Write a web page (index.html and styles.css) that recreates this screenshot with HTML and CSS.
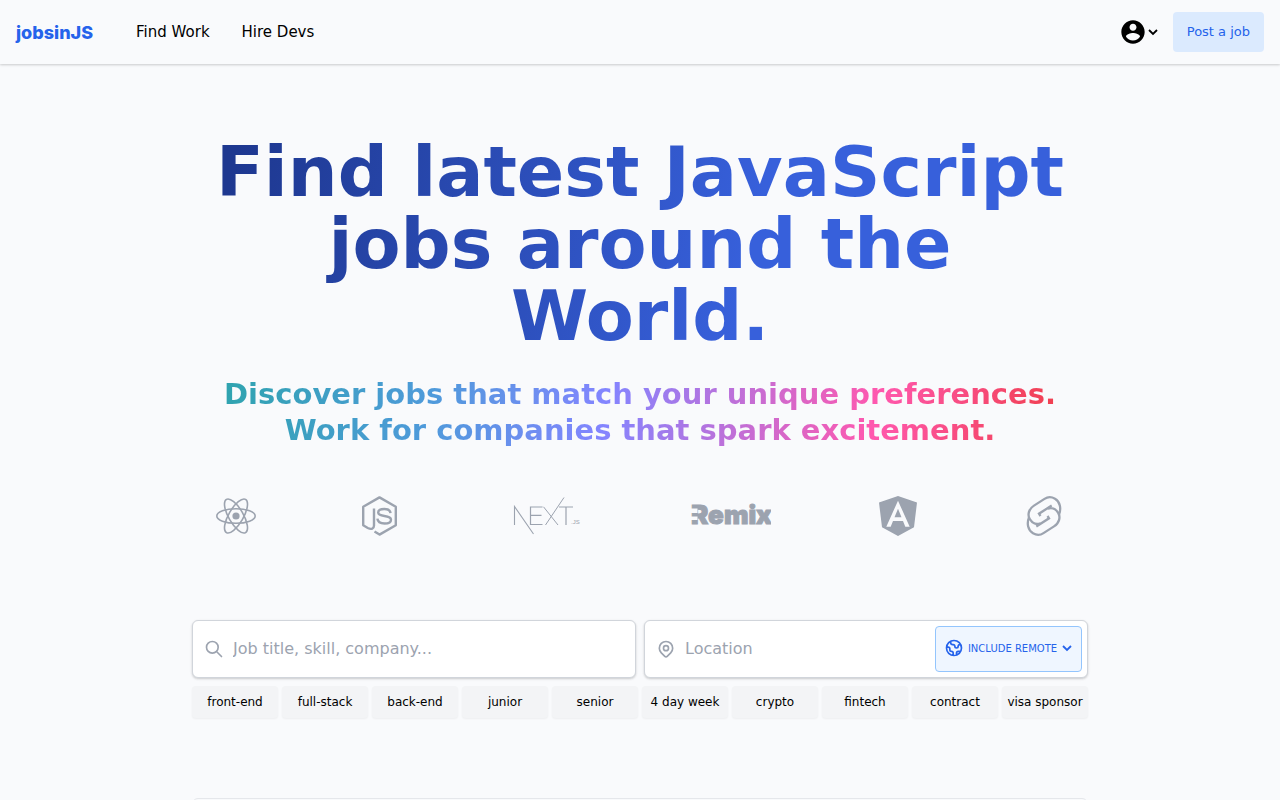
FILE: index.html
```
<!DOCTYPE html>
<html lang="en">
<head>
  <meta charset="UTF-8" />
  <meta name="viewport" content="width=device-width, initial-scale=1.0" />
  <title>jobsinJS - Find latest JavaScript jobs</title>
  <link rel="stylesheet" href="styles.css">
</head>
<body>
  <header class="navbar">
    <a class="logo" href="#">jobsinJS</a>
    <nav class="nav-links">
      <a href="#">Find Work</a>
      <a href="#">Hire Devs</a>
    </nav>
    <div class="nav-actions">
      <button class="account-button" type="button" aria-label="Account">
        <svg class="account-icon" viewBox="0 0 24 24" fill="currentColor"><path d="M12 2C6.48 2 2 6.48 2 12s4.480 10 10 10 10-4.480 10-10S17.520 2 12 2zm0 3c1.660 0 3 1.340 3 3s-1.340 3-3 3-3-1.340-3-3 1.340-3 3-3zm0 14.200c-2.500 0-4.710-1.280-6-3.220.03-1.990 4-3.080 6-3.080 1.990 0 5.970 1.090 6 3.080-1.290 1.940-3.500 3.220-6 3.220z"/></svg>
        <svg class="chevron" viewBox="0 0 12 12" fill="none" stroke="currentColor" stroke-width="1.8"><path d="M2 4l4 4 4-4"/></svg>
      </button>
      <a class="post-button" href="#">Post a job</a>
    </div>
  </header>

  <main class="container">
    <h1 class="title">Find latest JavaScript jobs around the World.</h1>
    <h2 class="subtitle">Discover jobs that match your unique preferences. Work for companies that spark excitement.</h2>

    <!-- Framework logos -->
    <div class="frameworks">
      <svg class="tech" viewBox="0 0 40 40" role="img" aria-label="React">
        <circle cx="20" cy="20" r="3.6" fill="currentColor"/>
        <g fill="none" stroke="currentColor" stroke-width="1.6">
          <ellipse cx="20" cy="20" rx="19.2" ry="7.3"/>
          <ellipse cx="20" cy="20" rx="19.2" ry="7.3" transform="rotate(60 20 20)"/>
          <ellipse cx="20" cy="20" rx="19.2" ry="7.3" transform="rotate(120 20 20)"/>
        </g>
      </svg>
      <svg class="tech tech-node" viewBox="0 0 36 40" role="img" aria-label="Node.js" fill="none" stroke="currentColor">
        <path stroke-width="2.4" stroke-linejoin="round" d="M12.5 35.5L17.5 38.600L33.800 29.300V10.700L17.500 1.400L1.200 10.700V29.300L5.800 32C9.500 33.800 12 32.600 12 29.500V12.500"/>
        <path stroke-width="2.4" d="M28.5 17.200C28.300 14.200 26.200 13 22.300 13C18.300 13 16.200 14.200 16.200 16.600C16.200 22 29 17.800 29 23.700C29 26.200 26.700 27.500 22.600 27.500C18 27.500 15.700 26.200 15.400 22.700"/>
      </svg>
      <svg class="tech tech-wide" viewBox="0 0 80 40" role="img" aria-label="Next.js">
        <g fill="none" stroke="currentColor">
          <path d="M9.500 29V10.500L28.500 38" stroke-width="1.100"/>
          <path d="M37.500 11H25.500V28.500H37.500M25.500 19.300H36.500" stroke-width="1.200"/>
          <path d="M38.500 10.800L53 29M40.500 29L59 1.500" stroke-width="1"/>
          <path d="M54 11H68M61 11V29" stroke-width="1.200"/>
        </g>
        <text class="next-suffix" x="66" y="28">.JS</text>
      </svg>
      <svg class="tech tech-wide" viewBox="0 0 80 40" role="img" aria-label="Remix">
        <text class="remix-text" x="0" y="28">Remix</text>
        <path class="remix-cut" d="M0 12.500H6.500V17H0zM0 20.500H6.500V24H0z"/>
      </svg>
      <svg class="tech" viewBox="0 0 40 40" role="img" aria-label="Angular">
        <path fill="currentColor" fill-rule="evenodd" d="M20 0L39 6.600L36 31.200L20 40L4 31.200L1 6.600zM20 4.700L8.300 30.700H12.700L15 25H25L27.300 30.700H31.700zM20 12.800L23.500 21.300H16.500z"/>
      </svg>
      <svg class="tech" viewBox="0 0 40 40" role="img" aria-label="Svelte" fill="none" stroke="currentColor" stroke-width="2.3">
        <path d="M35 18.500C37.500 12.500 36 5.500 31 2.700C27.500.700 23.500.900 20.500 2.900L10 9.600C4.500 13.200 3.300 19 5.800 23.200C8.200 27.200 12.500 28.800 16.500 27.300M12.300 30.500L25 22.300L23.500 20"/>
        <path d="M5 21.500C2.500 27.500 4 34.500 9 37.300C12.500 39.300 16.500 39.100 19.500 37.100L30 30.400C35.500 26.800 36.700 21 34.200 16.800C31.800 12.800 27.500 11.200 23.500 12.700M27.700 9.500L15 17.700L16.500 20"/>
      </svg>
    </div>

    <form class="search">
      <div class="search-box">
        <svg class="field-icon" viewBox="0 0 24 24" fill="none" stroke="currentColor" stroke-width="2" stroke-linecap="round"><path d="M21 21l-6-6m2-5a7 7 0 11-14 0 7 7 0 0114 0z"/></svg>
        <input type="text" placeholder="Job title, skill, company..." aria-label="Job title, skill, company">
      </div>
      <div class="search-box">
        <svg class="field-icon" viewBox="0 0 24 24" fill="none" stroke="currentColor" stroke-width="2" stroke-linejoin="round"><path d="M17.657 16.657L13.414 20.900a1.998 1.998 0 01-2.827 0l-4.244-4.243a8 8 0 1111.314 0z"/><path d="M15 11a3 3 0 11-6 0 3 3 0 016 0z"/></svg>
        <input type="text" placeholder="Location" aria-label="Location">
        <button class="remote-button" type="button">
          <svg class="globe-icon" viewBox="0 0 24 24" fill="none" stroke="currentColor" stroke-width="2" stroke-linecap="round" stroke-linejoin="round"><path d="M3.055 11H5a2 2 0 012 2v1a2 2 0 002 2 2 2 0 012 2v2.945M8 3.935V5.500A2.500 2.500 0 0010.500 8h.5a2 2 0 012 2 2 2 0 104 0 2 2 0 012-2h1.064M15 20.488V18a2 2 0 012-2h3.064M21 12a9 9 0 11-18 0 9 9 0 0118 0z"/></svg>
          INCLUDE REMOTE
          <svg class="chevron" viewBox="0 0 12 12" fill="none" stroke="currentColor" stroke-width="1.8"><path d="M2 4l4 4 4-4"/></svg>
        </button>
      </div>
    </form>

    <div class="tags">
      <button type="button">front-end</button>
      <button type="button">full-stack</button>
      <button type="button">back-end</button>
      <button type="button">junior</button>
      <button type="button">senior</button>
      <button type="button">4 day week</button>
      <button type="button">crypto</button>
      <button type="button">fintech</button>
      <button type="button">contract</button>
      <button type="button">visa sponsor</button>
    </div>

    <!-- Job list -->
    <section class="job-list" aria-label="Jobs"></section>
  </main>
</body>
</html>
```
FILE: styles.css
```
* {
  box-sizing: border-box;
}
html {
  scrollbar-width: none;
}
body {
  margin: 0;
  font-family: "DejaVu Sans", sans-serif;
  background-color: #f9fafc;
  color: black;
}
a {
  color: inherit;
  text-decoration: none;
}
button {
  border: none;
  font-family: inherit;
  cursor: pointer;
}
.navbar {
  display: flex;
  align-items: center;
  height: 64px;
  padding: 0 16px;
  box-shadow: 0 1px 3px rgba(0, 0, 0, 0.1), 0 1px 2px rgba(0, 0, 0, 0.1);
}
.logo {
  font-family: Inter, sans-serif;
  font-size: 18px;
  font-weight: 800;
  color: #2563eb;
}
.nav-links {
  display: flex;
  gap: 32px;
  margin-left: 43px;
  font-size: 15px;
}
.nav-actions {
  display: flex;
  align-items: center;
  gap: 14px;
  margin-left: auto;
}
.account-button {
  display: flex;
  align-items: center;
  padding: 0;
  background: none;
  color: black;
}
.account-icon {
  width: 28px;
  height: 28px;
}
.chevron {
  width: 12px;
  height: 12px;
}
.post-button {
  padding: 0 14px;
  line-height: 40px;
  font-size: 13px;
  background-color: #dbeafe;
  color: #2563eb;
  border-radius: 4px;
}
.container {
  max-width: 896px;
  margin: 0 auto;
  padding-top: 72px;
}
.title {
  margin: 0 0 24px;
  font-size: 70px;
  line-height: 72px;
  text-align: center;
  background: linear-gradient(102deg, #1e3890 5%, #3760db 62%);
  -webkit-background-clip: text;
  background-clip: text;
  color: transparent;
}
.subtitle {
  margin: 0;
  font-size: 29px;
  line-height: 36px;
  text-align: center;
  background: linear-gradient(100deg, #2aa5a8, #4f9adb 27%, #8385ff 46%, #ff58ae 76%, #ed3a3a);
  -webkit-background-clip: text;
  background-clip: text;
  color: transparent;
}
.frameworks {
  display: flex;
  justify-content: space-between;
  padding: 48px 24px 0;
  color: #9ca3af;
}
.tech {
  width: 40px;
  height: 40px;
}
.tech-node {
  width: 36px;
}
.tech-wide {
  width: 80px;
}
.next-suffix {
  font-family: "Liberation Sans", sans-serif;
  font-size: 6px;
  fill: currentColor;
}
.remix-text {
  font-family: Inter, sans-serif;
  font-size: 26px;
  font-weight: 900;
  fill: currentColor;
  stroke: currentColor;
  stroke-width: 1px;
}
.remix-cut {
  fill: #f9fafc;
}
.search {
  display: grid;
  grid-template-columns: 1fr 1fr;
  gap: 8px;
  margin-top: 84px;
}
.search-box {
  display: flex;
  align-items: center;
  height: 58px;
  padding: 0 5px 0 11px;
  background-color: white;
  border: 1px solid #d1d5db;
  border-radius: 6px;
  box-shadow: 0 1px 3px rgba(0, 0, 0, 0.1), 0 1px 2px rgba(0, 0, 0, 0.1);
}
.field-icon {
  flex: none;
  width: 20px;
  height: 20px;
  color: #9ca3af;
}
.search-box input {
  flex: 1;
  min-width: 0;
  padding: 0 9px 2px;
  border: none;
  outline: none;
  background: none;
  font-family: inherit;
  font-size: 16px;
}
.search-box input::placeholder {
  color: #9ca3af;
}
.remote-button {
  display: flex;
  align-items: center;
  justify-content: center;
  gap: 4px;
  width: 147px;
  height: 46px;
  padding: 0 0 2px;
  font-size: 10px;
  background-color: #eff6ff;
  color: #2563eb;
  border: 1px solid #93c5fd;
  border-radius: 4px;
}
.globe-icon {
  width: 20px;
  height: 20px;
}
.tags {
  display: grid;
  grid-template-columns: repeat(10, 1fr);
  gap: 4px;
  margin-top: 8px;
}
.tags button {
  height: 32px;
  padding: 0;
  font-size: 12px;
  white-space: nowrap;
  background-color: #f3f4f6;
  color: black;
  border-radius: 4px;
  box-shadow: 0 1px 2px rgba(0, 0, 0, 0.05);
}
.job-list {
  margin-top: 80px;
  min-height: 80px;
  border: 1px solid #e5e7eb;
  border-radius: 6px;
}
```
